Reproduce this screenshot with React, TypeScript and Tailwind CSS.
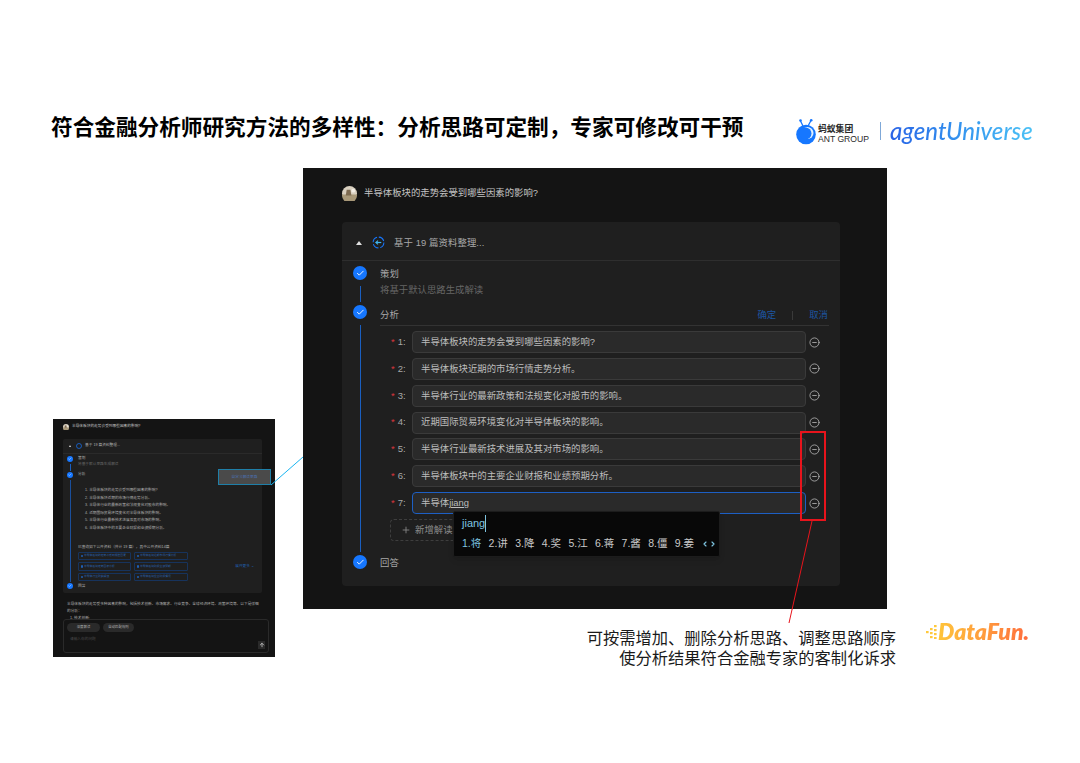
import { ArrowUp, Check, ChevronLeft, ChevronRight, CircleMinus, Plus } from 'lucide-react';

const questions = [
  '半导体板块的走势会受到哪些因素的影响?',
  '半导体板块近期的市场行情走势分析。',
  '半导体行业的最新政策和法规变化对股市的影响。',
  '近期国际贸易环境变化对半导体板块的影响。',
  '半导体行业最新技术进展及其对市场的影响。',
  '半导体板块中的主要企业财报和业绩预期分析。',
];

const candidates = ['1.将', '2.讲', '3.降', '4.奖', '5.江', '6.蒋', '7.酱', '8.僵', '9.姜'];

const miniSources = [
  '半导体板块的走势会受到哪些因素',
  '半导体板块近期市场行情分析',
  '半导体板块走势图表分析',
  '半导体板块财报业绩预期',
  '半导体行业政策解读',
  '半导体板块企业财报情况',
];

const StepDot = ({ size = 14 }: { size?: number }) => (
  <div
    className="flex shrink-0 items-center justify-center rounded-full bg-[#1677ff]"
    style={{ width: size, height: size }}
  >
    <Check size={size * 0.62} color="#fff" strokeWidth={2.5} />
  </div>
);

const Avatar = ({ size }: { size: number }) => (
  <svg width={size} height={size} viewBox="0 0 16 16" className="shrink-0">
    <circle cx="8" cy="8" r="8" fill="#d9d0c0" />
    <path d="M0 9h16v1a8 8 0 0 1-16 0z" fill="#a89878" />
    <path d="M5 4h4l1 6H4z" fill="#7d6a50" />
    <circle cx="12" cy="5" r="2" fill="#f2ede4" />
  </svg>
);

const QuestionRow = ({ index, text }: { index: number; text: string }) => (
  <div className="flex h-[22px] items-center">
    <div className="flex w-[32px] shrink-0 items-center pl-[11px] text-[9.5px] text-[#a8a8a8]">
      <span className="mr-[3px] text-[#d9363e]">*</span>
      {index}:
    </div>
    <div className="flex h-[22px] w-[394px] items-center rounded-[4px] border border-[#3a3a3a] bg-[#2a2a2a] pl-[8px] text-[9.4px] text-[#bdbdbd]">
      {text}
    </div>
    <CircleMinus size={11} color="#b4b4b4" strokeWidth={1.8} className="ml-[2.5px]" />
  </div>
);

const MainPanel = () => (
  <div className="absolute left-[303px] top-[168px] h-[441px] w-[584px] bg-[#141414] pl-[39px] pt-[17px] font-['Liberation_Sans','Noto_Sans_CJK_SC',sans-serif]">
    <div className="flex h-[16px] items-center gap-[7px] text-[9.4px] text-[#c4c4c4]">
      <Avatar size={15} />
      半导体板块的走势会受到哪些因素的影响?
    </div>

    <div className="mt-[21px] h-[364px] w-[498px] rounded-[4px] bg-[#1f1f1f]">
      <div className="flex h-[39px] items-center border-b border-[#2e2e2e] pl-[14px] pt-[3px] text-[9.4px] text-[#a8a8a8]">
        <div className="h-0 w-0 border-x-[3.5px] border-b-[4px] border-x-transparent border-b-[#e0e0e0]" />
        <svg width="13" height="13" viewBox="0 0 14 14" className="ml-[10px]">
          <circle cx="7" cy="7" r="5.8" fill="none" stroke="#1677ff" strokeWidth="1.1" strokeDasharray="7 2" />
          <path d="M4 7h6" stroke="#41b6f0" strokeWidth="1.3" />
          <path d="M6.5 5 4.2 7l2.3 2" fill="none" stroke="#41b6f0" strokeWidth="1.1" />
        </svg>
        <span className="ml-[9px] tracking-[0.1px] leading-[16px]">基于 19 篇资料整理...</span>
      </div>

      <div className="flex pl-[11px] pt-[5px]">
        <div className="flex w-[14px] shrink-0 flex-col items-center">
          <StepDot />
          <div className="mb-[3px] mt-[6px] h-[16px] w-px bg-[#1a5fc0]" />
        </div>
        <div className="ml-[13px] text-[9.4px]">
          <div className="h-[14px] leading-[16px] text-[#a8a8a8]">策划</div>
          <div className="mt-[2px] h-[14px] leading-[16px] text-[#666666]">将基于默认思路生成解读</div>
        </div>
      </div>

      <div className="flex pl-[11px]">
        <div className="flex w-[14px] shrink-0 flex-col items-center">
          <StepDot />
          <div className="mb-[2px] mt-[6px] h-[227px] w-px bg-[#1a5fc0]" />
        </div>
        <div className="ml-[13px] w-[449px]">
          <div className="flex h-[21px] items-center justify-between border-b border-[#333333] pr-[1px] pt-[1px] text-[9.4px]">
            <span className="text-[#a8a8a8]">分析</span>
            <div className="flex items-center text-[#1c55a0]">
              <span>确定</span>
              <span className="mx-[16px] h-[9px] w-px bg-[#3a3a3a]" />
              <span>取消</span>
            </div>
          </div>

          <div className="relative mt-[5px] flex flex-col gap-[4.85px]">
            {questions.map((q, i) => (
              <QuestionRow key={q} index={i + 1} text={q} />
            ))}
            <div className="flex h-[22px] items-center">
              <div className="flex w-[32px] shrink-0 items-center pl-[11px] text-[9.5px] text-[#a8a8a8]">
                <span className="mr-[3px] text-[#d9363e]">*</span>7:
              </div>
              <div className="flex h-[22px] w-[394px] items-center rounded-[4px] border border-[#1d5fc4] bg-[#2a2a2a] pl-[8px] text-[9.4px] text-[#bdbdbd]">
                半导体<span className="underline">jiang</span>
              </div>
              <CircleMinus size={11} color="#b4b4b4" strokeWidth={1.8} className="ml-[2.5px]" />
            </div>
            <div className="ml-[10px] flex h-[22px] w-[90px] items-center rounded-[4px] border border-dashed border-[#3e3e3e] pl-[10px] text-[9.4px] text-[#8c8c8c]">
              <Plus size={10} color="#8c8c8c" />
              <span className="ml-[4px]">新增解读</span>
            </div>

            {/* 输入法候选框 */}
            <div className="absolute left-[73px] top-[180px] flex h-[46px] w-[267px] flex-col rounded-[2px] border border-[#1c1c1c] bg-[#080808] pl-[8px] pt-[1px] shadow-md">
              <div className="flex h-[20px] items-center text-[11px] text-[#7ec4e0]">
                jiang
                <span className="h-[17px] w-px bg-[#7ec4e0]" />
              </div>
              <div className="mt-[3px] flex items-center text-[10.5px] text-[#c8c8c8]">
                {candidates.map((c, i) => (
                  <span key={c} className={i === 0 ? 'w-[26.6px] text-[#7ec4e0]' : 'w-[26.6px]'}>
                    {c}
                  </span>
                ))}
                <ChevronLeft size={8} color="#7ec4e0" strokeWidth={3.5} />
                <ChevronRight size={8} color="#7ec4e0" strokeWidth={3.5} />
              </div>
            </div>
          </div>
        </div>
      </div>

      <div className="flex items-center pl-[11px]">
        <StepDot />
        <span className="ml-[13px] pt-[2px] text-[9.4px] text-[#a8a8a8]">回答</span>
      </div>
    </div>
  </div>
);

const MiniPanel = () => (
  <div className="absolute left-[53px] top-[419px] h-[238px] w-[222px] overflow-hidden bg-[#141414] pl-[10px] pt-[3px] font-['Liberation_Sans','Noto_Sans_CJK_SC',sans-serif] text-[3.7px] text-[#b0b0b0]">
    <div className="flex h-[10px] items-center gap-[3px] text-[#c4c4c4]">
      <Avatar size={6} />
      半导体板块的走势会受到哪些因素的影响?
    </div>

    <div className="mt-[7px] h-[154px] w-[199px] rounded-[2px] bg-[#1f1f1f]">
      <div className="flex h-[15px] items-center border-b border-[#2a2a2a] pl-[6px]">
        <div className="h-0 w-0 border-x-[1.5px] border-b-[2px] border-x-transparent border-b-[#e0e0e0]" />
        <svg width="6" height="6" viewBox="0 0 14 14" className="ml-[5px]">
          <circle cx="7" cy="7" r="5.8" fill="none" stroke="#1677ff" strokeWidth="1.6" />
        </svg>
        <span className="ml-[3px]">基于 19 篇资料整理...</span>
      </div>

      <div className="flex pl-[4px] pt-[2px]">
        <div className="flex w-[6px] shrink-0 flex-col items-center">
          <StepDot size={6} />
          <div className="mb-[1px] mt-[2px] h-[7px] w-px bg-[#1a5fc0]" />
        </div>
        <div className="ml-[5px] leading-[5px]">
          <div>策划</div>
          <div className="mt-[1px] text-[#666666]">将基于默认思路生成解读</div>
        </div>
      </div>

      <div className="flex pl-[4px]">
        <div className="flex w-[6px] shrink-0 flex-col items-center">
          <StepDot size={6} />
          <div className="mb-[1px] mt-[2px] h-[102px] w-px bg-[#1a4f9c]" />
        </div>
        <div className="ml-[5px] w-[182px] leading-[5px]">
          <div>分析</div>
          <div className="mt-[11px] flex flex-col gap-[2.5px] pl-[7px]">
            {questions.map((q, i) => (
              <div key={q}>
                {i + 1}. {q}
              </div>
            ))}
          </div>
          <div className="mt-[14px]">已查询如下公开资料（共计 19 篇），其中公开资料14篇</div>
          <div className="mt-[2px] flex items-center justify-between">
            <div className="grid grid-cols-[53px_54px] gap-x-[3px] gap-y-[2px]">
              {miniSources.map((s) => (
                <div
                  key={s}
                  className="flex h-[8.5px] items-center gap-[1px] overflow-hidden whitespace-nowrap rounded-[1px] border border-[#17335c] pl-[1.5px] text-[2.8px] text-[#2a5fa8]"
                >
                  <span className="h-[2.5px] w-[2.5px] shrink-0 rounded-full bg-[#1f5fb4]" />
                  {s}
                </div>
              ))}
            </div>
            <span className="mr-[6px] text-[#1f5fb4]">展开更多 ⌄</span>
          </div>
        </div>
      </div>

      <div className="flex items-center pl-[4px] leading-[6px]">
        <StepDot size={6} />
        <span className="ml-[5px]">回答</span>
      </div>
    </div>

    <div className="mt-[8px] w-[197px] pl-[4px] leading-[7px]">
      半导体板块的走势受多种因素的影响，包括技术创新、市场需求、行业竞争、全球经济环境、政策环境等。以下是详细的分析：
      <div className="pl-[3px]">1. 技术创新:</div>
    </div>

    <div className="absolute left-[10px] top-[200px] flex h-[34px] w-[206px] flex-col rounded-[3px] border border-[#2a2a2a] bg-[#141414] px-[3px] pt-[3px]">
      <div className="flex gap-[3px] text-[3.4px]">
        <span className="flex h-[9px] w-[33px] items-center justify-center rounded-full bg-[#2a2a2a]">深度解读</span>
        <span className="flex h-[9px] w-[31px] items-center justify-center rounded-full bg-[#2a2a2a]">自动匹配规则</span>
      </div>
      <div className="mt-[5px] pl-[3px] text-[#4a4a4a]">请输入你的问题</div>
      <div className="absolute bottom-[3px] right-[3px] flex h-[8px] w-[7px] items-center justify-center bg-[#2a2a2a]">
        <ArrowUp size={6} color="#cfcfcf" strokeWidth={3} />
      </div>
    </div>
  </div>
);

const Logos = () => (
  <div className="absolute left-[796px] top-[116px] flex h-[30px] items-center">
    <svg width="21" height="27" viewBox="0 0 21 27" className="shrink-0">
      <path d="M7 8 4.5 3M12 8l3-5.5" stroke="#1677ff" strokeWidth="1.3" fill="none" />
      <circle cx="4.5" cy="2.5" r="1.3" fill="#1677ff" />
      <circle cx="15.2" cy="2.2" r="1.3" fill="#1677ff" />
      <circle cx="10" cy="16.5" r="9.8" fill="#1677ff" />
      <circle cx="11.5" cy="15" r="6" fill="#dff0ff" />
      <circle cx="9.5" cy="15.5" r="6" fill="#1677ff" />
    </svg>
    <div className="ml-[1px] mt-[6px] flex w-[52px] flex-col text-[#2a2a2a]">
      <span className="text-[8.8px] font-bold leading-[10px]">蚂蚁集团</span>
      <span className="whitespace-nowrap font-['Liberation_Sans',sans-serif] text-[8.6px] leading-[10px]">
        ANT GROUP
      </span>
    </div>
    <div className="ml-[10px] h-[18px] w-px bg-[#7fa8d8]" />
    <span className="ml-[9px] bg-gradient-to-r from-[#2a63e6] to-[#4cc3f5] bg-clip-text pr-[2px] font-['Lato',sans-serif] text-[24px] font-medium italic leading-[30px] text-transparent">
      agentUniverse
    </span>
  </div>
);

const DataFunLogo = () => (
  <div className="absolute left-[925px] top-[618px] flex h-[26px] items-center">
    <svg width="13" height="15" viewBox="0 0 13 15" className="shrink-0">
      {[
        [9, 1],
        [5, 4],
        [9, 5],
        [1, 7],
        [5, 8],
        [9, 9],
        [5, 12],
        [9, 13],
      ].map(([x, y]) => (
        <rect key={`${x}-${y}`} x={x} y={y} width="2.6" height="2.2" fill="#ffc93c" />
      ))}
    </svg>
    <span className="bg-gradient-to-r from-[#ffc53a] to-[#ff6a3d] bg-clip-text pr-[2px] font-['Lato',sans-serif] text-[23px] font-extrabold italic leading-[26px] text-transparent">
      DataFun.
    </span>
  </div>
);

export default function App() {
  return (
    <div className="relative h-[763px] w-[1080px] overflow-hidden bg-white font-['Noto_Sans_CJK_SC','Liberation_Sans',sans-serif]">
      <h1 className="absolute left-[51px] top-[110px] whitespace-nowrap text-[21.65px] font-bold leading-[32px] text-black">
        符合金融分析师研究方法的多样性：分析思路可定制，专家可修改可干预
      </h1>
      <Logos />

      <MiniPanel />
      <MainPanel />

      {/* 小图上的高亮框 */}
      <div className="absolute left-[218px] top-[469px] flex h-[16px] w-[53px] items-center justify-center border border-[#1f7fa8] bg-[#4a4a4a] text-[3.7px] text-[#4a70b0]">
        自定义解读思路
      </div>

      {/* 连接线和红框 */}
      <svg width="1080" height="763" className="pointer-events-none absolute left-0 top-0">
        <line x1="271" y1="485" x2="303" y2="457" stroke="#19b5f1" strokeWidth="1" />
        <line x1="812" y1="521" x2="789" y2="623" stroke="#e8141c" strokeWidth="1" />
      </svg>
      <div className="absolute left-[800px] top-[431px] h-[90px] w-[26px] border-2 border-[#e8141c]" />

      <div className="absolute left-[580px] top-[627px] w-[316px] text-right text-[16.3px] leading-[20px] text-[#1a1a1a]">
        可按需增加、删除分析思路、调整思路顺序
        <br />
        使分析结果符合金融专家的客制化诉求
      </div>
      <DataFunLogo />
    </div>
  );
}
